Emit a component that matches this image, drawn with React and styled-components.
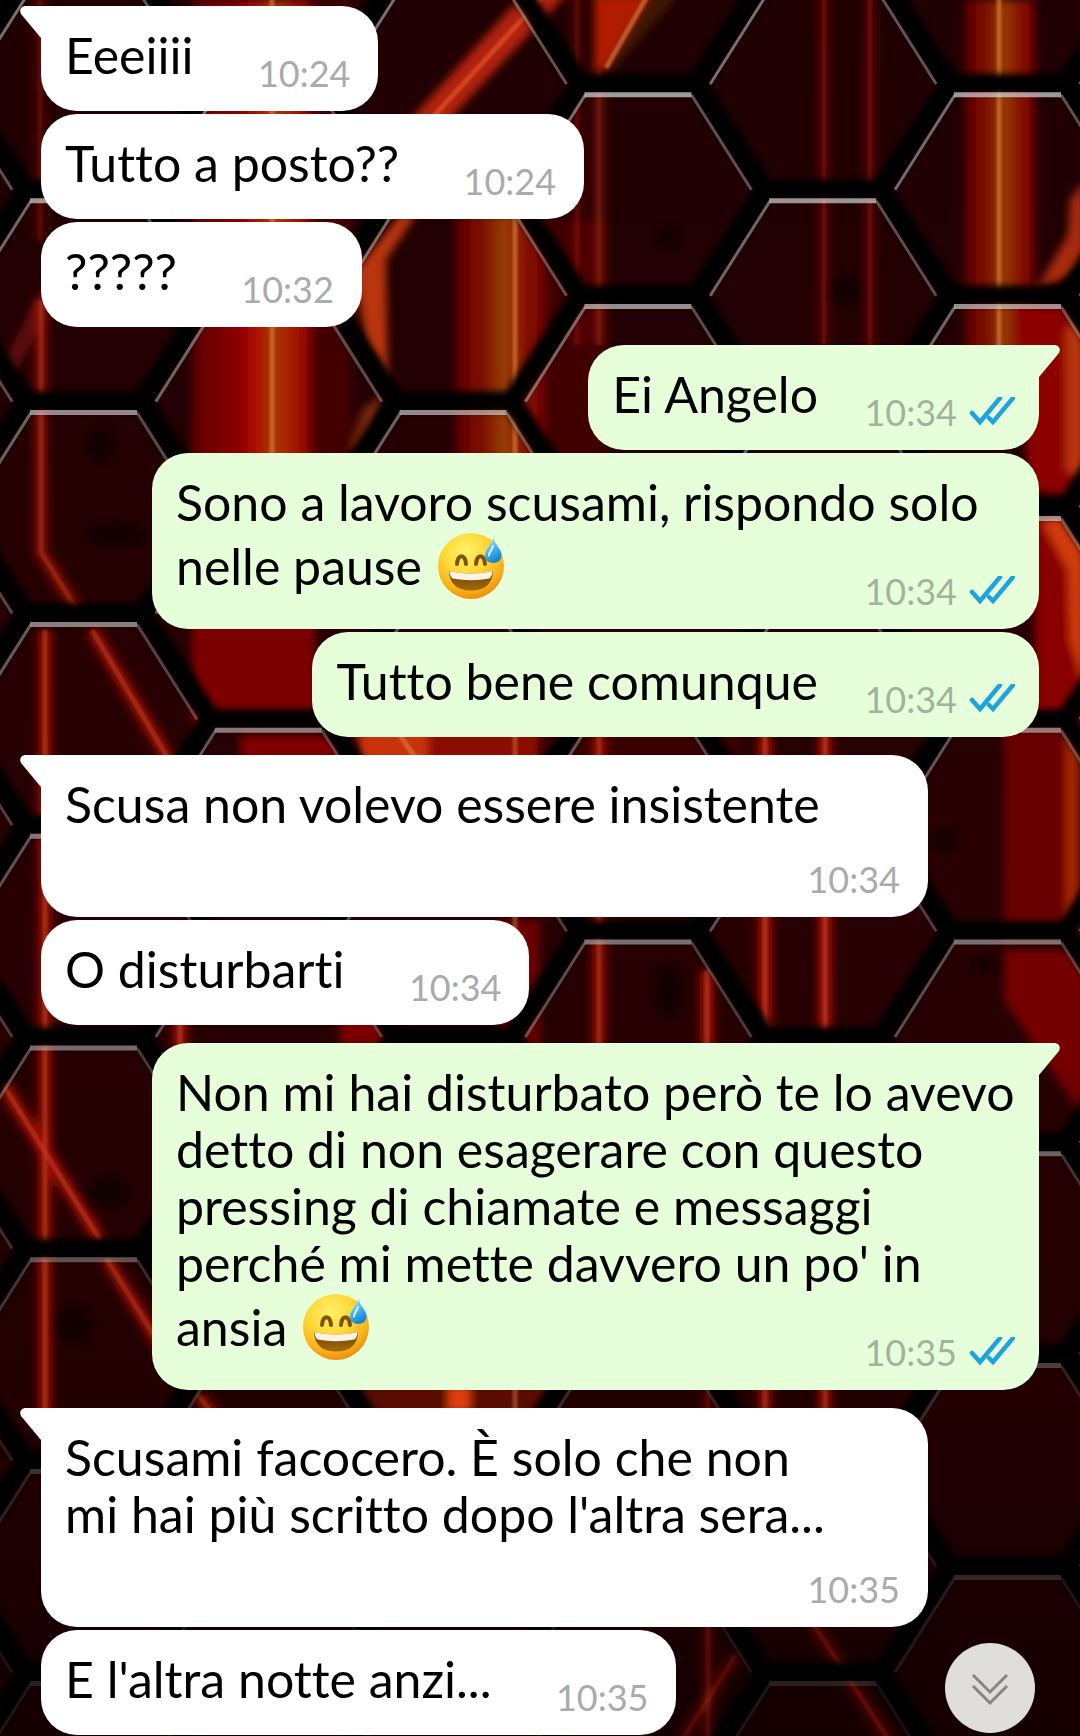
import React from 'react';
import styled, { createGlobalStyle, css } from 'styled-components';

const GlobalStyle = createGlobalStyle`
  * {
    box-sizing: border-box;
  }

  body {
    margin: 0;
    background: #0a0001;
    font-family: Lato, "Noto Sans", sans-serif;
  }
`;

const Screen = styled.div`
  position: relative;
  min-height: 100vh;
  overflow: hidden;
`;

const WallpaperSvg = styled.svg`
  position: absolute;
  top: 0;
  left: 0;
  width: 100%;
  height: 100%;
`;

const Conversation = styled.main`
  position: relative;
  display: flex;
  flex-direction: column;
  gap: 18px;
  padding: 6px 41px 0;
`;

const Group = styled.section`
  display: flex;
  flex-direction: column;
  gap: 3px;
  align-items: ${({ $sent }) => ($sent ? 'flex-end' : 'flex-start')};
`;

const Bubble = styled.article`
  position: relative;
  display: grid;
  max-width: calc(100% - 111px);
  padding: 21px 24px 20px;
  border-radius: 36px;
  color: #000;
  background: ${({ $sent }) => ($sent ? '#e6ffda' : '#fff')};
  ${({ $tail, $sent }) =>
    $tail &&
    css`
      ${$sent ? 'border-top-right-radius: 0;' : 'border-top-left-radius: 0;'}
    `}
`;

const Tail = styled.svg`
  position: absolute;
  top: 0;
  width: 22px;
  height: 33px;
  ${({ $sent }) =>
    $sent
      ? 'right: -21px; fill: #e6ffda; transform: scaleX(-1);'
      : 'left: -21px; fill: #fff;'}
`;

const Text = styled.p`
  grid-area: 1 / 1;
  margin: 0;
  padding-bottom: 7px;
  font-size: 50px;
  line-height: 57px;
  font-variant-ligatures: none;
  white-space: pre-line;
`;

// keeps room for the time at the end of the last line
const Spacer = styled.span`
  display: inline-block;
  width: ${({ $sent }) => ($sent ? '197px' : '161px')};
`;

const Meta = styled.div`
  grid-area: 1 / 1;
  place-self: end;
  display: flex;
  align-items: center;
  gap: 12px;
  height: 36px;
  margin-right: ${({ $sent }) => ($sent ? '0' : '4px')};
  color: ${({ $sent }) => ($sent ? '#a2b29d' : '#a9abad')};
`;

const Time = styled.time`
  font-size: 36px;
  line-height: 36px;
`;

const EmojiSvg = styled.svg`
  width: 72px;
  height: 71px;
  vertical-align: -17px;
`;

const ScrollButton = styled.button`
  position: fixed;
  right: 45px;
  bottom: 3px;
  width: 90px;
  height: 90px;
  padding: 0;
  border: 0;
  border-radius: 50%;
  background: #dfdedc;
  cursor: pointer;
`;

const groups = [
  {
    sent: false,
    messages: [
      { text: 'Eeeiiii', time: '10:24' },
      { text: 'Tutto a posto??', time: '10:24' },
      { text: '?????', time: '10:32' },
    ],
  },
  {
    sent: true,
    messages: [
      { text: 'Ei Angelo', time: '10:34' },
      {
        text: 'Sono a lavoro scusami, rispondo solo nelle pause ',
        emoji: true,
        time: '10:34',
      },
      { text: 'Tutto bene comunque', time: '10:34' },
    ],
  },
  {
    sent: false,
    messages: [
      { text: 'Scusa non volevo essere insistente', time: '10:34' },
      { text: 'O disturbarti', time: '10:34' },
    ],
  },
  {
    sent: true,
    messages: [
      {
        text:
          'Non mi hai disturbato però te lo avevo ' +
          'detto di non esagerare con questo ' +
          'pressing di chiamate e messaggi ' +
          "perché mi mette davvero un po' in " +
          'ansia ',
        emoji: true,
        time: '10:35',
      },
    ],
  },
  {
    sent: false,
    messages: [
      {
        text: "Scusami facocero. È solo che non\nmi hai più scritto dopo l'altra sera...",
        time: '10:35',
      },
      { text: "E l'altra notte anzi...", time: '10:35' },
    ],
  },
];

const Checks = () => (
  <svg width="46" height="30" viewBox="0 0 46 30" fill="none" stroke="#1fa3dd" strokeWidth="4.5" strokeLinecap="round" strokeLinejoin="miter" role="img" aria-label="Letto">
    <path d="M3 16 L11 25 L31 1" />
    <path d="M20 21 L24 25 L44 1" />
  </svg>
);

const Emoji = () => (
  <EmojiSvg viewBox="0 0 72 71" role="img" aria-label="😅">
    <defs>
      <radialGradient id="face" cx="0.42" cy="0.28" r="0.74">
        <stop offset="0" stopColor="#fff06a" />
        <stop offset="0.45" stopColor="#ffd938" />
        <stop offset="0.78" stopColor="#fab31c" />
        <stop offset="1" stopColor="#ec8c0e" />
      </radialGradient>
      <linearGradient id="mouth" x1="0" y1="0" x2="0" y2="1">
        <stop offset="0" stopColor="#6d4206" />
        <stop offset="1" stopColor="#a56a09" />
      </linearGradient>
      <linearGradient id="drop" x1="0" y1="0" x2="0.4" y2="1">
        <stop offset="0" stopColor="#bdeaff" />
        <stop offset="0.5" stopColor="#4fbcf5" />
        <stop offset="1" stopColor="#1685d3" />
      </linearGradient>
    </defs>
    <circle cx="36" cy="35" r="33" fill="url(#face)" />
    <g fill="none" stroke="#80530b" strokeWidth="4" strokeLinecap="round">
      <path d="M22 33 C22.5 22.5 30.5 22.5 31 33" />
      <path d="M41 33 C41.5 22.5 49.5 22.5 50 33" />
    </g>
    <path d="M14 40 Q36 45 58 40 Q57 59.500 36 59.500 Q15 59.500 14 40 Z" fill="url(#mouth)" />
    <path d="M14.500 40 Q36 45 57.500 40 Q57.500 45 54.500 47.500 Q36 51 17.500 47.500 Q14.500 45 14.500 40 Z" fill="#fbf3e8" />
    <path d="M58.700 6.500 C59.500 14 66.500 18 66.500 24 C66.500 29 63 32 58.300 32 C53.500 32 50 29 50 24 C50 18 57.500 13 58.700 6.500 Z" fill="url(#drop)" />
    <path d="M58 15 C57 19 54 21 54 24.500" fill="none" stroke="#d9f4ff" strokeWidth="2" strokeLinecap="round" />
  </EmojiSvg>
);

// top edge of every honeycomb cell, two interleaved columns
const cells = [];
for (let col = -1; col < 7; col += 1) {
  const x = 31 + col * 184.8;
  const start = col % 2 === 0 ? -11 : -117;
  for (let row = 0; row < 10; row += 1) {
    cells.push({ x, y: start + row * 211.8 });
  }
}

const hexPoints = ({ x, y }) =>
  [[x - 5, y - 11], [x + 111, y - 11], [x + 180, y + 95], [x + 111, y + 201], [x - 5, y + 201], [x - 74, y + 95]]
    .map((p) => p.join(','))
    .join(' ');

const bands = [
  { x: 192, y: 0, w: 120, h: 470, fill: 'url(#redBand)' },
  { x: 312, y: 0, w: 40, h: 470, fill: '#420003' },
  { x: 455, y: 215, w: 90, h: 250, fill: 'url(#amberBand)' },
  { x: 965, y: 0, w: 70, h: 350, fill: 'url(#amberBand)' },
  { x: 192, y: 600, w: 123, h: 125, fill: '#7c0000' },
  { x: 240, y: 735, w: 110, h: 25, fill: '#800000' },
  { x: 358, y: 700, w: 70, h: 65, fill: '#c83008' },
  { x: 428, y: 700, w: 110, h: 65, fill: '#8c1000' },
  { x: 500, y: 920, w: 40, h: 125, fill: '#6c0002' },
  { x: 340, y: 1010, w: 45, h: 35, fill: '#7c0002' },
  { x: 1004, y: 700, w: 62, h: 240, fill: '#690000' },
  { x: 1066, y: 700, w: 14, h: 240, fill: '#a52806' },
  { x: 540, y: 735, w: 200, h: 25, fill: '#3a0003' },
  { x: 545, y: 220, w: 60, h: 240, fill: '#400004' },
  { x: 360, y: 1385, w: 190, h: 28, fill: '#5a0c00' },
  { x: 448, y: 1385, w: 22, h: 28, fill: '#e03c0c' },
];

const shapes = [
  { d: 'M536 -20 L580 -20 L430 140 L392 140 Z', fill: '#b02408' },
  { d: 'M400 215 L355 270 L366 345 L388 385 L386 260 L416 215 Z', fill: '#b8360f' },
  { d: 'M350 450 L362 410 L384 392 L372 450 Z', fill: '#7a280c' },
  { d: 'M594 -5 L652 -5 L602 72 L594 72 Z', fill: '#b01c04' },
  { d: 'M650 -5 L680 -5 L612 72 L602 72 Z', fill: '#3d1204' },
  { d: 'M1085 180 L1070 200 L1068 235 L1036 290 L1085 270 Z', fill: '#a82c08' },
  { d: 'M1015 305 L1085 305 L1085 500 L1030 490 Z', fill: '#8c0300' },
  { d: 'M1066 330 L1085 310 L1085 480 L1066 470 Z', fill: '#b83408' },
  { d: 'M1035 515 L1062 515 L1085 560 L1085 720 L1035 720 Z', fill: '#8a0500' },
  { d: 'M1042 522 L1062 515 L1085 550 L1085 690 L1070 640 L1068 570 Z', fill: '#d03a0c' },
  { d: 'M1004 950 L1085 950 L1085 1120 L1045 1060 L1004 1000 Z', fill: '#750000' },
  { d: 'M0 370 L45 280 L45 320 L8 385 Z', fill: '#5a1008' },
];

const streaks = [
  { d: 'M40 -10 V240', o: 0.25 },
  { d: 'M41 300 V552 L82 618', o: 0.6 },
  { d: 'M45 630 V1420', o: 0.75 },
  { d: 'M92 630 L176 772', o: 0.75 },
  { d: 'M0 1080 L100 1240', o: 0.8 },
  { d: 'M106 1258 L160 1345', o: 0.7 },
  { d: 'M577 -10 V345', o: 0.25 },
  { d: 'M599 70 V345', o: 0.35 },
  { d: 'M824 -10 V345', o: 0.3 },
  { d: 'M870 -10 V345', o: 0.3 },
  { d: 'M599 735 V1045', o: 0.7 },
  { d: 'M707 970 V1045', o: 0.8 },
  { d: 'M765 735 V1045', o: 0.85 },
  { d: 'M825 735 V1045', o: 0.85 },
  { d: 'M765 1385 V1412', o: 0.7 },
  { d: 'M825 1385 V1412', o: 0.7 },
  { d: 'M180 1010 V1050', o: 0.8 },
  { d: 'M198 1395 L225 1430', o: 0.6 },
  { d: 'M708 1385 V1740', o: 0.25 },
  { d: 'M736 1655 L682 1740', o: 0.25 },
  { d: 'M812 1622 L892 1745', o: 0.3 },
];

const Wallpaper = () => (
  <WallpaperSvg viewBox="0 0 1080 1736" preserveAspectRatio="xMidYMin slice" aria-hidden="true">
    <defs>
      <linearGradient id="base" x1="0" y1="0" x2="0" y2="1">
        <stop offset="0" stopColor="#1f0003" />
        <stop offset="0.5" stopColor="#280003" />
        <stop offset="0.8" stopColor="#220002" />
        <stop offset="1" stopColor="#150002" />
      </linearGradient>
      <linearGradient id="redBand">
        <stop offset="0" stopColor="#5e0000" />
        <stop offset="0.4" stopColor="#8c0000" />
        <stop offset="0.55" stopColor="#b01000" />
        <stop offset="0.68" stopColor="#a43c08" />
        <stop offset="0.82" stopColor="#ac1c00" />
        <stop offset="1" stopColor="#7c0000" />
      </linearGradient>
      <linearGradient id="amberBand">
        <stop offset="0" stopColor="#5c0000" />
        <stop offset="0.3" stopColor="#7c0c00" />
        <stop offset="0.55" stopColor="#984008" />
        <stop offset="0.75" stopColor="#8a1400" />
        <stop offset="1" stopColor="#6e0000" />
      </linearGradient>
      <linearGradient id="fade" x1="0" y1="0" x2="0" y2="1">
        <stop offset="0" stopColor="#e5c9cc" stopOpacity="0.9" />
        <stop offset="0.65" stopColor="#cdb4b6" stopOpacity="0.65" />
        <stop offset="0.85" stopColor="#a99" stopOpacity="0.35" />
        <stop offset="1" stopColor="#a99" stopOpacity="0.2" />
      </linearGradient>
      <filter id="soft" filterUnits="userSpaceOnUse" x="-20" y="-20" width="1120" height="1780">
        <feGaussianBlur stdDeviation="4" />
      </filter>
      <filter id="glow" filterUnits="userSpaceOnUse" x="-20" y="-20" width="1120" height="1780">
        <feGaussianBlur stdDeviation="5" />
      </filter>
      <filter id="edge" filterUnits="userSpaceOnUse" x="-20" y="-20" width="1120" height="1780">
        <feGaussianBlur stdDeviation="3" />
      </filter>
      <filter id="thin" filterUnits="userSpaceOnUse" x="-20" y="-20" width="1120" height="1780">
        <feGaussianBlur stdDeviation="1" />
      </filter>
      <mask id="lines">
        <rect width="1080" height="1736" fill="url(#fade)" />
      </mask>
    </defs>
    <rect width="1080" height="1736" fill="url(#base)" />
    <g filter="url(#soft)">
      {bands.map((b) => (
        <rect key={`${b.x}-${b.y}`} x={b.x} y={b.y} width={b.w} height={b.h} fill={b.fill} />
      ))}
      {shapes.map((s) => (
        <path key={s.d} d={s.d} fill={s.fill} />
      ))}
    </g>
    <g fill="none" stroke="#b01200" strokeWidth="14" filter="url(#glow)">
      {streaks.map((s) => (
        <path key={s.d} d={s.d} opacity={s.o} />
      ))}
    </g>
    <g fill="none" stroke="#c4402c" strokeWidth="5" filter="url(#thin)">
      {streaks.map((s) => (
        <path key={s.d} d={s.d} opacity={s.o * 0.7} />
      ))}
    </g>
    <g fill="none" stroke="#d4783a" strokeWidth="5" opacity="0.7" filter="url(#thin)">
      <path d="M272 -10 V470" />
      <path d="M999 -10 V350" />
      <path d="M515 215 V470" />
      <path d="M515 735 V930" opacity="0.7" />
      <path d="M515 1385 V1412" opacity="0.7" />
      <path d="M558 -20 L412 140" stroke="#e4542c" />
      <path d="M648 -5 L606 68" />
      <path d="M400 735 L420 765" />
    </g>
    <g fill="#080001" filter="url(#glow)" opacity="0.8">
      <ellipse cx="668" cy="236" rx="12" ry="8" />
      <ellipse cx="102" cy="445" rx="12" ry="16" />
      <ellipse cx="118" cy="535" rx="30" ry="10" />
      <ellipse cx="668" cy="990" rx="14" ry="26" />
      <ellipse cx="110" cy="1192" rx="20" ry="14" />
      <ellipse cx="74" cy="1325" rx="16" ry="18" />
      <ellipse cx="985" cy="965" rx="12" ry="8" />
      <ellipse cx="845" cy="290" rx="12" ry="14" />
      <ellipse cx="944" cy="840" rx="14" ry="10" />
    </g>
    <g fill="none" stroke="#020101" strokeWidth="20" filter="url(#edge)">
      {cells.map((c) => (
        <polygon key={`${c.x}-${c.y}`} points={hexPoints(c)} />
      ))}
    </g>
    <g fill="none" mask="url(#lines)">
      {cells.map((c) => (
        <g key={`${c.x}-${c.y}`} stroke="#fff">
          <path d={`M${c.x - 60} ${c.y + 95} L${c.x} ${c.y}`} strokeWidth="3" opacity="0.6" />
          <path d={`M${c.x - 1} ${c.y} H${c.x + 106}`} strokeWidth="5" opacity="0.85" />
          <path d={`M${c.x + 106} ${c.y} L${c.x + 166} ${c.y + 95}`} strokeWidth="3" opacity="0.45" />
        </g>
      ))}
    </g>
  </WallpaperSvg>
);

const Message = ({ message, sent, tail }) => (
  <Bubble $sent={sent} $tail={tail}>
    {tail && (
      <Tail $sent={sent} viewBox="0 0 22 33" aria-hidden="true">
        <path d="M22 0 H6 C1 0 -1 4 1 8 L21 32 H22 Z" />
      </Tail>
    )}
    <Text>
      {message.text}
      {message.emoji && <Emoji />}
      <Spacer $sent={sent} />
    </Text>
    <Meta $sent={sent}>
      <Time>{message.time}</Time>
      {sent && <Checks />}
    </Meta>
  </Bubble>
);

const App = () => (
  <>
    <GlobalStyle />
    <Screen>
      <Wallpaper />
      <Conversation>
        {groups.map((group, i) => (
          <Group key={i} $sent={group.sent}>
            {group.messages.map((message, j) => (
              <Message key={message.text} message={message} sent={group.sent} tail={j === 0} />
            ))}
          </Group>
        ))}
      </Conversation>
      <ScrollButton type="button" aria-label="Vai ai messaggi recenti">
        <svg width="90" height="90" viewBox="0 0 90 90" fill="none" stroke="#858585" strokeWidth="3">
          <path d="M28 32 L45 49 L62 32" />
          <path d="M28 43 L45 60 L62 43" />
        </svg>
      </ScrollButton>
    </Screen>
  </>
);

export default App;
